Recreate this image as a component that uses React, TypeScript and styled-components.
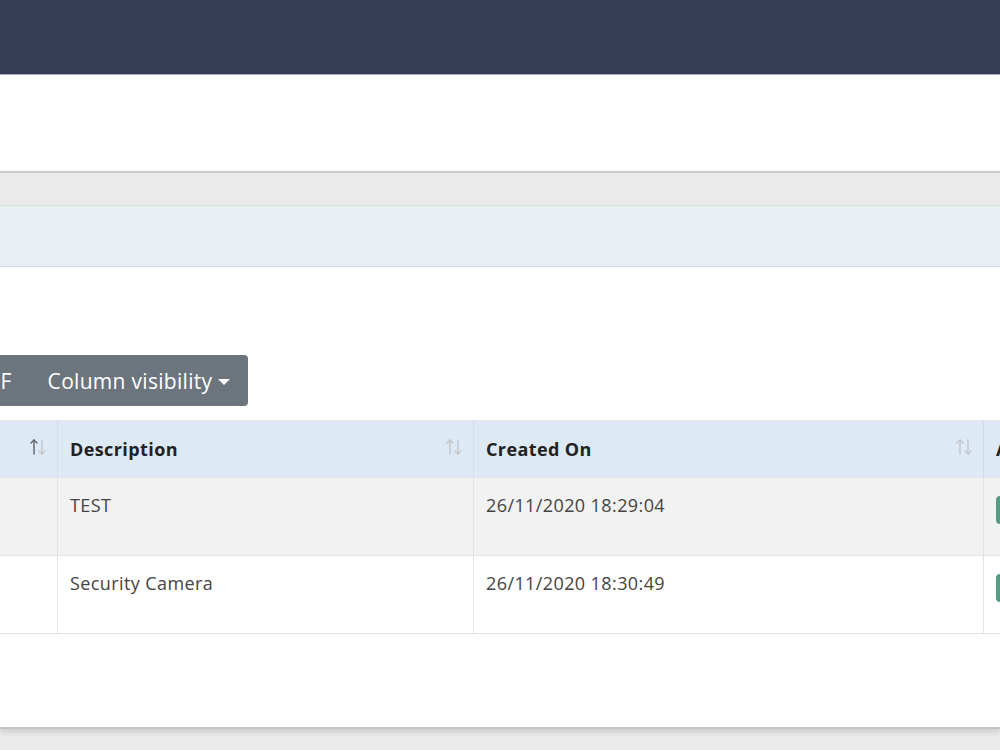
import React from 'react';
import styled, { createGlobalStyle } from 'styled-components';

interface Row {
    id: number;
    name: string;
    description: string;
    createdOn: string;
}

const rows: Row[] = [
    { id: 1, name: 'Test Device', description: 'TEST', createdOn: '26/11/2020 18:29:04' },
    { id: 2, name: 'Camera 01', description: 'Security Camera', createdOn: '26/11/2020 18:30:49' },
];

const GlobalStyle = createGlobalStyle`
    * {
        box-sizing: border-box;
    }
    html, body {
        margin: 0;
        padding: 0;
        background: #ebebeb;
    }
    body {
        font-family: 'Open Sans', 'Noto Sans', sans-serif;
    }
`;

const SortIcon: React.FC<{ active?: boolean }> = ({ active }) => (
    <SortGlyph width="18" height="20" viewBox="0 0 18 20">
        <g fill="none" strokeWidth="1.4" strokeLinecap="round" strokeLinejoin="round">
            <g stroke={active ? '#5f6368' : '#c3c6ca'}>
                <path d="M5 17V3" />
                <path d="M2 6l3-3 3 3" />
            </g>
            <g stroke="#c3c6ca">
                <path d="M13 3v14" />
                <path d="M10 14l3 3 3-3" />
            </g>
        </g>
    </SortGlyph>
);

const App: React.FC = () => {
    return (
        <>
            <GlobalStyle />
            <Viewport>
                <TopBar />
                <TitleArea />
                <Card>
                    <CardHeader />
                    <FilterBand />
                    <CardBody>
                        <ButtonGroup>
                            <ExportButton>PDF</ExportButton>
                            <ExportButton $last>
                                Column visibility
                                <Caret />
                            </ExportButton>
                        </ButtonGroup>
                        <Table>
                            <colgroup>
                                <col style={{ width: 300 }} />
                                <col style={{ width: 416 }} />
                                <col style={{ width: 510 }} />
                                <col style={{ width: 220 }} />
                            </colgroup>
                            <thead>
                                <tr>
                                    <HeadCell>
                                        Name
                                        <SortIcon active />
                                    </HeadCell>
                                    <HeadCell>
                                        Description
                                        <SortIcon />
                                    </HeadCell>
                                    <HeadCell>
                                        Created On
                                        <SortIcon />
                                    </HeadCell>
                                    <HeadCell>Actions</HeadCell>
                                </tr>
                            </thead>
                            <tbody>
                                {rows.map((row, index) => (
                                    <BodyRow key={row.id} $odd={index % 2 === 0}>
                                        <Cell>{row.name}</Cell>
                                        <Cell>{row.description}</Cell>
                                        <Cell>{row.createdOn}</Cell>
                                        <Cell>
                                            <ActionButton>Edit</ActionButton>
                                        </Cell>
                                    </BodyRow>
                                ))}
                            </tbody>
                        </Table>
                    </CardBody>
                </Card>
            </Viewport>
        </>
    );
};

export default App;

const Viewport = styled.div`
    width: 1000px;
    height: 750px;
    overflow: hidden;
    background: #ebebeb;
`;

const TopBar = styled.header`
    height: 75px;
    background-color: #353e56;
    border-bottom: 1px solid #a9adb7;
`;

const TitleArea = styled.div`
    height: 96px;
    background-color: #ffffff;
`;

const Card = styled.section`
    background-color: #ffffff;
    border-top: 2px solid #c9cbd0;
    border-bottom: 2px solid #c4c4c4;
    box-shadow: 0 3px 6px rgba(0, 0, 0, 0.14);
`;

const CardHeader = styled.div`
    height: 33px;
    background-color: #eaeaea;
    border-bottom: 1px solid #dcdcdc;
`;

const FilterBand = styled.div`
    height: 61px;
    background-color: #e8f0f3;
    border-bottom: 1px solid #d4d9dc;
`;

const CardBody = styled.div`
    padding: 88px 0 93px;
    overflow: hidden;
`;

const ButtonGroup = styled.div`
    display: flex;
    margin-left: -46px;
    margin-bottom: 14px;
`;

const ExportButton = styled.button<{ $last?: boolean }>`
    display: flex;
    align-items: center;
    gap: 6px;
    height: 51px;
    padding: 0 18px;
    border: none;
    border-radius: ${(props) => (props.$last ? '0 4px 4px 0' : '0')};
    background-color: #6c757d;
    color: #ffffff;
    font-family: 'Open Sans', 'Noto Sans', sans-serif;
    font-size: 21px;
    letter-spacing: 0.3px;
    cursor: pointer;
`;

const Caret = styled.span`
    width: 0;
    height: 0;
    margin-top: 2px;
    border-left: 6px solid transparent;
    border-right: 6px solid transparent;
    border-top: 6px solid #ffffff;
`;

const Table = styled.table`
    margin-left: -243px;
    border-collapse: collapse;
    table-layout: fixed;
    width: 1446px;
    border-top: 1px solid #e6e6e6;
`;

const HeadCell = styled.th`
    position: relative;
    height: 57px;
    padding: 0 40px 0 12px;
    background-color: #dde9f4;
    border-left: 1px solid #d3dde6;
    border-bottom: 1px solid #e2e6ea;
    text-align: left;
    font-size: 18px;
    font-weight: 700;
    letter-spacing: 0.4px;
    color: #222222;
    white-space: nowrap;
`;

const SortGlyph = styled.svg`
    position: absolute;
    right: 10px;
    top: 50%;
    transform: translateY(-60%);
`;

const BodyRow = styled.tr<{ $odd: boolean }>`
    background-color: ${(props) => (props.$odd ? '#f2f2f2' : '#ffffff')};
`;

const Cell = styled.td`
    height: 78px;
    padding: 15px 12px 0;
    vertical-align: top;
    border-left: 1px solid #e3e3e3;
    border-bottom: 1px solid #e3e3e3;
    font-size: 18px;
    letter-spacing: 0.4px;
    color: #444444;
    white-space: nowrap;
`;

const ActionButton = styled.button`
    margin-top: 3px;
    height: 28px;
    padding: 0 12px;
    border: none;
    border-radius: 4px;
    background-color: #579c87;
    color: #ffffff;
    font-family: 'Open Sans', 'Noto Sans', sans-serif;
    font-size: 14px;
`;
